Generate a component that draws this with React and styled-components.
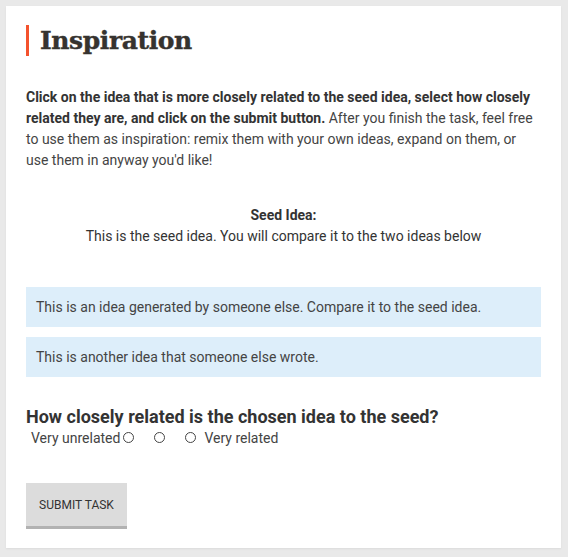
import React, { useState } from 'react';
import styled, { createGlobalStyle } from 'styled-components';

const GlobalStyle = createGlobalStyle`
  html, body {
    margin: 0;
    padding: 0;
    background: #e9e9e9;
  }
  body {
    font-family: Roboto, "Liberation Sans", sans-serif;
    color: #444;
  }
`;

const Page = styled.div`
  padding: 6px 7px 9px 6px;
`;

const Card = styled.section`
  background: #fff;
  padding: 19px 20px 19px 20px;
  box-shadow: 0 1px 2px rgba(0, 0, 0, 0.06);
`;

const Title = styled.h1`
  margin: 0;
  padding-left: 11px;
  border-left: 3px solid #f4522d;
  font-family: "DejaVu Serif", "Liberation Serif", serif;
  font-weight: bold;
  font-size: 25px;
  line-height: 31px;
  color: #36332f;
  letter-spacing: -0.4px;
  -webkit-text-stroke: 0.4px #36332f;
`;

const Intro = styled.p`
  margin: 31px 0 0 0;
  font-size: 14px;
  line-height: 21px;
  color: #444;

  strong {
    color: #333;
  }
`;

const Seed = styled.div`
  margin-top: 34px;
  text-align: center;
  font-size: 14px;
  line-height: 21px;
  color: #333;
`;

const SeedLabel = styled.div`
  font-weight: bold;
`;

const IdeaList = styled.div`
  margin-top: 40px;
  display: flex;
  flex-direction: column;
  gap: 10px;
`;

const Idea = styled.div`
  background: ${p => (p.$active ? '#c7e2f6' : '#ddeefa')};
  padding: 10px 10px;
  font-size: 14px;
  line-height: 20px;
  color: #444;
  cursor: pointer;
`;

const Question = styled.h2`
  margin: 29px 0 0 0;
  font-size: 18px;
  line-height: 22px;
  font-weight: bold;
  color: #333;
`;

const Scale = styled.div`
  display: flex;
  align-items: center;
  margin: 0 0 0 5px;
  font-size: 14px;
  line-height: 20px;
  color: #444;
`;

const Radio = styled.input.attrs({ type: 'radio' })`
  appearance: none;
  width: 11px;
  height: 11px;
  margin: 0 ${p => p.$gap || 0}px 1px 3px;
  border: 1px solid #444;
  border-radius: 50%;
  background: #fff;
  flex: none;

  &:checked {
    background: radial-gradient(circle, #444 0 3px, #fff 3.5px);
  }
`;

const SubmitButton = styled.button`
  margin-top: 35px;
  display: block;
  width: 101px;
  height: 46px;
  padding: 0;
  border: none;
  border-bottom: 3px solid #b2b2b2;
  background: #dcdcdc;
  font-family: Roboto, "Liberation Sans", sans-serif;
  font-size: 12px;
  color: #333;
  text-transform: uppercase;
  cursor: pointer;
`;

export default function App() {
  const [chosen, setChosen] = useState(null);
  const [rating, setRating] = useState(null);

  const ideas = [
    'This is an idea generated by someone else. Compare it to the seed idea.',
    'This is another idea that someone else wrote.',
  ];

  return (
    <Page>
      <GlobalStyle />
      <Card>
        <Title>Inspiration</Title>
        <Intro>
          <strong>
            Click on the idea that is more closely related to the seed idea, select how closely
            related they are, and click on the submit button.
          </strong>{' '}
          After you finish the task, feel free to use them as inspiration: remix them with your own
          ideas, expand on them, or use them in anyway you'd like!
        </Intro>

        <Seed>
          <SeedLabel>Seed Idea:</SeedLabel>
          This is the seed idea. You will compare it to the two ideas below
        </Seed>

        <IdeaList>
          {ideas.map((text, i) => (
            <Idea key={i} $active={chosen === i} onClick={() => setChosen(i)}>
              {text}
            </Idea>
          ))}
        </IdeaList>

        <Question>How closely related is the chosen idea to the seed?</Question>
        <Scale>
          Very unrelated
          <Radio name="rel" $gap={17} checked={rating === 0} onChange={() => setRating(0)} />
          <Radio name="rel" $gap={17} checked={rating === 1} onChange={() => setRating(1)} />
          <Radio name="rel" $gap={8} checked={rating === 2} onChange={() => setRating(2)} />
          Very related
        </Scale>

        <SubmitButton>Submit Task</SubmitButton>
      </Card>
    </Page>
  );
}
